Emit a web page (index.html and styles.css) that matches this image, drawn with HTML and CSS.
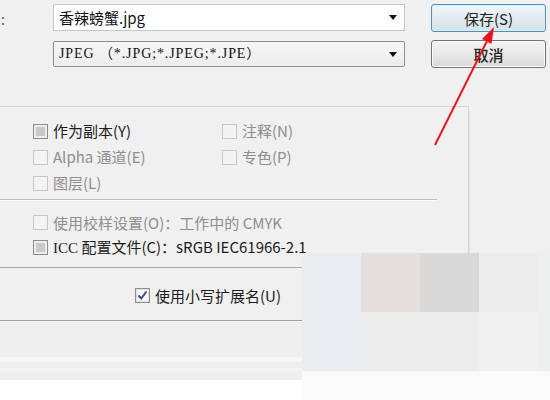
FILE: index.html
```html
<!DOCTYPE html>
<html lang="zh-CN">
<head>
<meta charset="utf-8">
<title>存储为</title>
<link rel="stylesheet" href="styles.css">
</head>
<body>
<div class="top">
  <div class="lbl">:</div>
  <div class="fields">
    <div class="field name"><span class="val">香辣螃蟹.jpg</span><span class="drop"></span></div>
    <div class="field fmt"><span class="val mono">JPEG （*.JPG;*.JPEG;*.JPE）</span><span class="drop"></span></div>
  </div>
  <div class="btns">
    <div class="btn save">保存(S)</div>
    <div class="btn cancel">取消</div>
  </div>
</div>

<div class="options">
  <div class="g1">
    <label class="opt"><span class="cb"></span><span class="t">作为副本(Y)</span></label>
    <label class="opt dis"><span class="cb"></span><span class="t">注释(N)</span></label>
    <label class="opt dis"><span class="cb"></span><span class="t">Alpha 通道(E)</span></label>
    <label class="opt dis"><span class="cb"></span><span class="t">专色(P)</span></label>
    <label class="opt dis"><span class="cb"></span><span class="t">图层(L)</span></label>
  </div>
  <div class="sep"></div>
  <div class="g2">
    <label class="opt dis"><span class="cb"></span><span class="t">使用校样设置(O)：工作中的 CMYK</span></label>
    <label class="opt"><span class="cb"></span><span class="t"><span class="serif">ICC</span> 配置文件(C)：sRGB IEC61966-2.1</span></label>
  </div>
</div>

<div class="ext">
  <label class="opt"><span class="cb on"><svg viewBox="0 0 13 13" width="13" height="13"><path d="M2.5 6.5 L5.2 9.5 L10.5 2.5" fill="none" stroke="#3a4f7e" stroke-width="2"/></svg></span><span class="t">使用小写扩展名(U)</span></label>
</div>

<div class="foot"></div>
<div class="stripes">
  <div class="s1"></div><div class="s2"></div><div class="s3"></div><div class="s4"></div>
</div>

<div class="mosaic">
  <div class="m c1"></div><div class="m c2"></div><div class="m c3"></div><div class="m c4"></div><div class="m c5"></div>
  <div class="m c1"></div><div class="m c6"></div><div class="m c6"></div><div class="m c7"></div><div class="m c5"></div>
  <div class="m c8"></div><div class="m c8"></div><div class="m c8"></div><div class="m c8"></div><div class="m c8"></div>
</div>

<svg class="arrow" viewBox="0 0 550 400" width="550" height="400">
  <line x1="435" y1="145" x2="487" y2="41" stroke="#e8141c" stroke-width="2"/>
  <polygon points="494,27 491.5,44 482,39" fill="#e8141c"/>
</svg>
</body>
</html>
```

FILE: styles.css
```css
html, body {
  margin: 0;
  padding: 0;
}
body {
  width: 550px;
  height: 400px;
  position: relative;
  overflow: hidden;
  background: #fff;
  font-family: "Noto Sans CJK SC", "Noto Sans", sans-serif;
  color: #1e1e1e;
}

.top {
  display: flex;
  padding-top: 4px;
  height: 64px;
  background: #f0f0f0;
}
.lbl {
  width: 53px;
  box-sizing: border-box;
  padding: 5px 0 0 1px;
  font-size: 14px;
  line-height: 20px;
  color: #555;
}
.fields {
  width: 352px;
  display: flex;
  flex-direction: column;
  gap: 10px;
}
.field {
  box-sizing: border-box;
  display: flex;
  align-items: center;
  padding-left: 5px;
  border: 1px solid #acb0b6;
  background: #fff;
}
.field.name {
  height: 27px;
  border-color: #c3c7cc;
}
.field.fmt {
  height: 26px;
  border-color: #8b8d90;
  border-radius: 2px;
  background: linear-gradient(#f7f7f7, #ececec);
}
.val {
  font-size: 15px;
  line-height: 20px;
  color: #111;
}
.mono {
  font-family: "Liberation Serif", "Noto Sans CJK SC", serif;
  font-size: 14px;
  letter-spacing: 0.9px;
}
.drop {
  margin-left: auto;
  margin-right: 7px;
  width: 0;
  height: 0;
  border-top: 5px solid #111;
  border-left: 4px solid transparent;
  border-right: 4px solid transparent;
}

.btns {
  margin-left: 26px;
  width: 115px;
  display: flex;
  flex-direction: column;
  gap: 8px;
}
.btn {
  box-sizing: border-box;
  height: 28px;
  border-radius: 3px;
  display: flex;
  align-items: center;
  justify-content: center;
  font-size: 15px;
  color: #222;
}
.btn.save {
  border: 1px solid #4f91bd;
  box-shadow: inset 0 0 0 1px #d8eefa;
  background: linear-gradient(#f1f6f9, #e2ebf0 50%, #d6e3ea);
}
.btn.cancel {
  border: 1px solid #747474;
  box-shadow: inset 0 0 0 1px #fafafa;
  background: linear-gradient(#f4f4f4, #e8e8e8 50%, #d9d9d9);
  font-weight: 500;
}

.options {
  margin-top: 38px;
  width: 468px;
  border-top: 1px solid #d3d3d3;
  border-right: 1px solid #d6d6d6;
  border-bottom: 1px solid #a9a9a9;
  box-shadow: 4px 0 0 -3px #e2e2e2;
  background: #f0f0f0;
}
body::before {
  content: "";
  position: absolute;
  left: 0;
  top: 0;
  right: 0;
  height: 380px;
  background: #f0f0f0;
  z-index: -1;
}

.opt {
  display: flex;
  align-items: center;
  gap: 5px;
  font-size: 15px;
  line-height: 20px;
  color: #1c1c1c;
  white-space: nowrap;
}
.opt.dis {
  color: #8e8e8e;
}
.cb {
  box-sizing: border-box;
  width: 15px;
  height: 15px;
  border: 1px solid #8c8c8c;
  background: #c9c9c9;
  box-shadow: inset 0 0 0 2px #ececec;
  flex: none;
  display: flex;
  align-items: center;
  justify-content: center;
}
.dis .cb {
  border-color: #c7c7c7;
  background: #f3f3f3;
  box-shadow: none;
}
.cb.on {
  background: #f6f6f6;
  box-shadow: inset 0 0 0 1px #e0e0e0;
}
.serif {
  font-family: "Liberation Serif", serif;
}

.g1 {
  display: grid;
  grid-template-columns: 189px auto;
  grid-auto-rows: 26px;
  align-items: center;
  padding: 11px 0 3px 33px;
}
.sep {
  width: 437px;
  height: 1px;
  background: #bdbdbd;
  border-bottom: 1px solid #fafafa;
}
.g2 {
  display: grid;
  grid-auto-rows: 25px;
  align-items: center;
  padding: 9px 0 7px 33px;
}

.ext {
  padding: 15px 0 12px 135px;
  height: 25px;
  display: flex;
  align-items: center;
  border-bottom: 1px solid #9d9d9d;
  background: #f0f0f0;
}
.foot {
  height: 35px;
  background: #efefef;
  border-top: 1px solid #f8f8f8;
}
.stripes > div {
  width: 100%;
}
.s1 { height: 5px; background: #f6f6f6; }
.s2 { height: 6px; background: #ededed; }
.s3 { height: 3px; background: #f4f4f4; }
.s4 { height: 9px; background: #eeeeee; }

.mosaic {
  position: absolute;
  left: 302px;
  top: 253px;
  display: grid;
  grid-template-columns: 59px 59px 59px 59px 12px;
  grid-template-rows: 59px 59px 29px;
}
.c1 { background: #e9edf0; }
.c2 { background: #e3dfdc; }
.c3 { background: #d9d9d9; }
.c4 { background: #ececec; }
.c5 { background: #eef0ef; }
.c6 { background: #ebebeb; }
.c7 { background: #f1f1f1; }
.c8 { background: #fafafa; }

.arrow {
  position: absolute;
  left: 0;
  top: 0;
  pointer-events: none;
}
```
